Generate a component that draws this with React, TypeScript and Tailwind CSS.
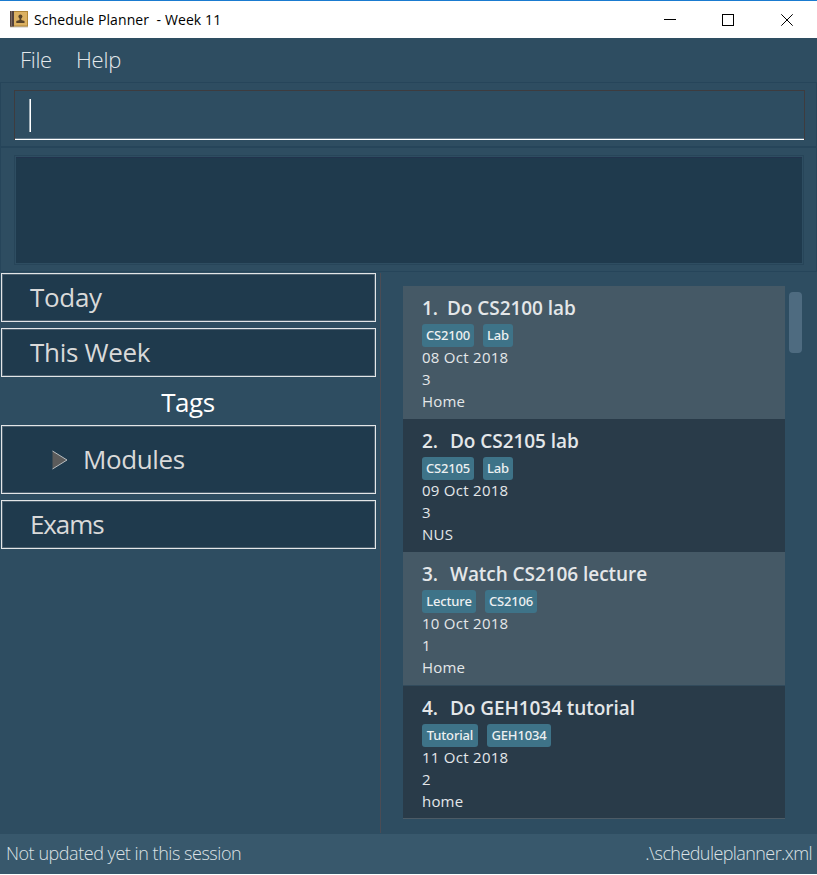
import React from "react";

type Task = {
  id: number;
  title: string;
  tags: string[];
  date: string;
  priority: string;
  venue: string;
  cardStyle: string;
  numberStyle: string;
};

const tasks: Task[] = [
  { id: 1, title: "Do CS2100 lab", tags: ["CS2100", "Lab"], date: "08 Oct 2018", priority: "3", venue: "Home", cardStyle: "bg-[#455966] h-[133px]", numberStyle: "w-[25px]" },
  { id: 2, title: "Do CS2105 lab", tags: ["CS2105", "Lab"], date: "09 Oct 2018", priority: "3", venue: "NUS", cardStyle: "bg-[#293b49] h-[133px]", numberStyle: "w-[28px]" },
  { id: 3, title: "Watch CS2106 lecture", tags: ["Lecture", "CS2106"], date: "10 Oct 2018", priority: "1", venue: "Home", cardStyle: "bg-[#455966] h-[134px] border-b border-[#324b5c]", numberStyle: "w-[28px]" },
  { id: 4, title: "Do GEH1034 tutorial", tags: ["Tutorial", "GEH1034"], date: "11 Oct 2018", priority: "2", venue: "home", cardStyle: "bg-[#293b49] h-[133px] border-b border-[#4c5b66]", numberStyle: "w-[28px]" },
];

const tagWidths: Record<string, string> = {
  CS2100: "w-[52px]",
  CS2105: "w-[52px]",
  CS2106: "w-[52px]",
  Lab: "w-[30px]",
  Lecture: "w-[54px]",
  Tutorial: "w-[56px]",
  GEH1034: "w-[64px]",
};

function TitleBar() {
  return (
    <header className="flex h-[38px] shrink-0 items-center border-t border-[#1a7bd0] bg-white text-black">
      <svg className="ml-[10px] shrink-0" width="18" height="17" viewBox="0 0 18 17">
        <rect x="0" y="15" width="18" height="1.5" fill="#c9c4bd" />
        <rect x="0" y="0" width="18" height="15.5" fill="#b08536" />
        <rect x="0" y="0" width="4" height="15.5" fill="#54433d" />
        <rect x="1" y="0" width="1" height="15.5" fill="#7b6a66" />
        <rect x="4" y="1" width="13" height="13.5" fill="#dcb162" />
        <circle cx="10.4" cy="5.6" r="2" fill="#57432a" />
        <path d="M9.5 7h1.8v2l3.2 1v2H6.3v-2l3.2-1z" fill="#57432a" />
      </svg>
      <span className="ml-[6px] whitespace-pre text-[14px] tracking-[0.1px]">Schedule Planner  - Week 11</span>
      <svg className="ml-auto mr-[23px]" width="130" height="14" viewBox="0 0 130 14" fill="none" stroke="#000">
        <path d="M0 6.5h12" />
        <rect x="58.5" y="1.5" width="11" height="11" />
        <path d="M117.3 1.3l11.4 11.4M128.7 1.3l-11.4 11.4" />
      </svg>
    </header>
  );
}

function TreeBox({ children }: { children: React.ReactNode }) {
  return (
    <div className="mb-[6px] flex h-[49px] items-center border border-[#e3e6e8] bg-[#1f3a4d] pl-[28px] text-[26px] text-[#d9d9d9] shadow-[inset_0_0_0_1px_#4c6170]">
      {children}
    </div>
  );
}

function TaskCard({ task }: { task: Task }) {
  return (
    <article className={`${task.cardStyle} flex flex-col pl-[19px] pt-[8px] text-[#e4e7e9]`}>
      <h2 className="flex h-[28px] items-center whitespace-pre text-[19px] font-semibold tracking-[-0.06px]">
        <span className={task.numberStyle}>{task.id}.</span>
        <span>{task.title}</span>
      </h2>
      <div className="mt-[2px] flex h-[23px] gap-[9px]">
        {task.tags.map((t) => (
          <span key={t} className={`${tagWidths[t]} flex h-[23px] items-center justify-center rounded-[3px] bg-[#3e7388] font-['Noto_Sans','Open_Sans',sans-serif] text-[13px] font-medium tracking-[-0.15px] text-[#edf0f1]`}>
            {t}
          </span>
        ))}
      </div>
      <p className="h-[22px] text-[15px] leading-[21px] tracking-[0.27px]">{task.date}</p>
      <p className="h-[22px] text-[15px] leading-[21px]">{task.priority}</p>
      <p className="h-[22px] text-[15px] leading-[21px] tracking-[0.2px]">{task.venue}</p>
    </article>
  );
}

export default function App() {
  return (
    <div className="flex h-[875px] w-[817px] flex-col overflow-hidden border-b border-white bg-[#2e4d61] font-['Open_Sans','Noto_Sans',sans-serif]">
      <TitleBar />
      <nav className="flex h-[44px] shrink-0 items-center gap-[24px] pb-[2px] pl-[20px] text-[22px] font-light text-[#e3e8eb]">
        <span className="tracking-[-0.3px]">File</span>
        <span className="tracking-[-0.2px]">Help</span>
      </nav>
      <section className="h-[66px] shrink-0 border border-b-2 border-[#26455a] pl-[13px] pr-[12px] pt-[7px]">
        <div className="-mr-px flex h-[50px] items-center border border-b-0 border-[#3e3c3f] pl-[14px] shadow-[inset_0_-1px_0_#ffffff,inset_0_-2px_0_#62798a]">
          <span className="h-[33px] w-[2px] border-l border-[#a3b1ba] bg-white" />
        </div>
      </section>
      <section className="h-[124px] shrink-0 border border-t-0 border-[#26455a] pl-[13px] pr-[12px] pt-[7px]">
        <div className="h-[110px] border border-[#274559] p-px">
          <div className="h-full border-t border-[#22334d] bg-[#1f3a4d]" />
        </div>
      </section>
      <main className="flex h-[562px] shrink-0">
        <aside className="w-[380px] pl-px pr-[4px] pt-px">
          <TreeBox><span className="tracking-[-0.3px]">Today</span></TreeBox>
          <div className="-mb-[6px]">
            <TreeBox><span className="tracking-[-0.3px]">This Week</span></TreeBox>
          </div>
          <h1 className="flex h-[48px] items-center justify-center pr-px pt-[2px] text-[26px] tracking-[-0.4px] text-white">Tags</h1>
          <div className="mb-[6px] flex h-[69px] items-center border border-[#e3e6e8] bg-[#1f3a4d] pl-[50px] text-[26px] text-[#d9d9d9] shadow-[inset_0_0_0_1px_#4c6170]">
            <svg width="16" height="20" viewBox="0 0 16 20">
              <path d="M.5 1L15 10L.5 19z" fill="#5b5b5b" />
              <path d="M.5 1L15 10L.5 19" fill="none" stroke="#b9bec1" />
            </svg>
            <span className="ml-[15px] tracking-[-0.4px]">Modules</span>
          </div>
          <TreeBox><span className="tracking-[-1.1px]">Exams</span></TreeBox>
        </aside>
        <div className="mt-px h-[560px] w-px bg-[#4a4c55]" />
        <section className="flex flex-1 pl-[22px] pt-[14px]">
          <div className="w-[382px]">
            {tasks.map((t) => <TaskCard key={t.id} task={t} />)}
          </div>
          <div className="ml-[4px] mt-[6px] h-[61px] w-[13px] rounded-[4px] bg-[#4e6b80]" />
        </section>
      </main>
      <footer className="flex h-[40px] shrink-0 items-center justify-between bg-[#38586c] pb-[2px] pl-[6px] pr-[5px] text-[18px] font-light text-[#dce2e6]">
        <span className="tracking-[-0.46px]">Not updated yet in this session</span>
        <span className="tracking-[-0.58px]">.\scheduleplanner.xml</span>
      </footer>
    </div>
  );
}
